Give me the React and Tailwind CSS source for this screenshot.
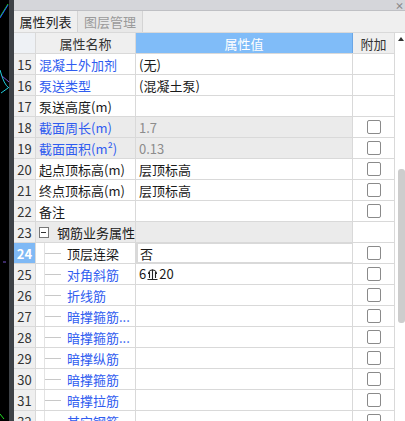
import React from 'react';

const rows = [
  { n: 15, name: '混凝土外加剂', blue: true, value: '(无)' },
  { n: 16, name: '泵送类型', blue: true, value: '(混凝土泵)' },
  { n: 17, name: '泵送高度(m)', value: '' },
  { n: 18, name: '截面周长(m)', blue: true, value: '1.7', gray: true, cb: true },
  { n: 19, name: '截面面积(m²)', blue: true, value: '0.13', gray: true, cb: true },
  { n: 20, name: '起点顶标高(m)', value: '层顶标高', cb: true },
  { n: 21, name: '终点顶标高(m)', value: '层顶标高', cb: true },
  { n: 22, name: '备注', value: '', cb: true },
  { n: 23, name: '钢筋业务属性', group: true, value: '' },
  { n: 24, name: '顶层连梁', child: true, value: '否', selected: true, cb: true },
  { n: 25, name: '对角斜筋', child: true, blue: true, value: 'rebar', cb: true },
  { n: 26, name: '折线筋', child: true, blue: true, value: '', cb: true },
  { n: 27, name: '暗撑箍筋...', child: true, blue: true, value: '', cb: true },
  { n: 28, name: '暗撑箍筋...', child: true, blue: true, value: '', cb: true },
  { n: 29, name: '暗撑纵筋', child: true, blue: true, value: '', cb: true },
  { n: 30, name: '暗撑箍筋', child: true, blue: true, value: '', cb: true },
  { n: 31, name: '暗撑拉筋', child: true, blue: true, value: '', cb: true },
  { n: 32, name: '其它钢筋', child: true, blue: true, value: '', cb: true },
];

// HRB400 rebar grade mark
const RebarMark = () => (
  <svg width="11" height="13" viewBox="0 0 11 13" className="inline-block mx-[1px] -mt-[3px] align-middle">
    <path d="M1.5 6a4 4 0 0 1 8 0" fill="none" stroke="#222" strokeWidth="1.1" />
    <path d="M5.5 1.5v9.5M2.5 4v6M8.5 4v6M0.5 11.5h10" fill="none" stroke="#222" strokeWidth="1.1" />
  </svg>
);

const Checkbox = () => (
  <div className="w-[14px] h-[14px] border border-[#8a8a8a] rounded-[2px] bg-white" />
);

const Row = ({ r }) => {
  const nameColor = r.blue ? 'text-[#2f5cf0]' : 'text-[#1a1a1a]';
  return (
    <div className="flex shrink-0 h-[21px] border-b border-[#d9d9d9]">
      <div
        className={`w-[22px] shrink-0 flex items-center justify-center border-r border-[#d9d9d9] text-[13px] ${
          r.selected ? 'bg-[#7fb9f5] text-white font-bold' : 'bg-[#efefef] text-[#333]'
        }`}
      >
        {r.n}
      </div>
      <div
        className={`w-[100px] shrink-0 flex items-center border-r border-[#d9d9d9] relative overflow-hidden whitespace-nowrap ${
          r.gray || r.group ? 'bg-[#ebebeb]' : 'bg-white'
        }`}
      >
        {r.group && (
          <>
            <div className="ml-[3px] w-[11px] h-[11px] border border-[#777] bg-white flex items-center justify-center">
              <div className="w-[5px] h-px bg-[#333]" />
            </div>
            <span className="ml-[8px] text-[#1a1a1a]">{r.name}</span>
          </>
        )}
        {r.child && (
          <>
            <div className="absolute left-[8px] top-0 bottom-0 w-px bg-[#e3e3e3]" />
            <div className="ml-[9px] w-[16px] h-px bg-[#c8c8c8]" />
            <span className={`ml-[6px] ${nameColor}`}>{r.name}</span>
          </>
        )}
        {!r.group && !r.child && <span className={`ml-[3px] ${nameColor}`}>{r.name}</span>}
      </div>
      <div
        className={`w-[217px] shrink-0 flex items-center border-r border-[#d9d9d9] whitespace-nowrap ${
          r.gray || r.group ? 'bg-[#ebebeb]' : 'bg-white'
        } ${r.selected ? 'border-2 border-[#6aa6e6] pl-[2px] -mt-px h-[22px]' : 'pl-[3px]'} ${
          r.gray ? 'text-[#8c8c8c]' : 'text-[#1a1a1a]'
        }`}
      >
        {r.value === 'rebar' ? (
          <span>
            6<RebarMark />20
          </span>
        ) : (
          r.value
        )}
      </div>
      <div className="w-[41px] shrink-0 flex items-center justify-center bg-white">
        {r.cb && <Checkbox />}
      </div>
    </div>
  );
};

export default function App() {
  return (
    <div
      className="w-[405px] h-[421px] overflow-hidden flex bg-white text-[13px] leading-none"
      style={{ fontFamily: '"Noto Sans CJK SC", "Noto Sans", sans-serif' }}
    >
      {/* CAD canvas edge */}
      <div className="w-[9px] shrink-0 bg-black relative">
        <svg width="9" height="421" className="absolute inset-0">
          <path d="M0 17L8 4" stroke="#22dd22" strokeWidth="1" />
          <path d="M0 18L8 5" stroke="#2255ff" strokeWidth="1" />
          <path d="M0 70Q4 85 9 88" stroke="#22d0e0" fill="none" strokeWidth="1" />
          <path d="M2 76L9 82" stroke="#7755cc" fill="none" strokeWidth="1" />
          <path d="M1 93L8 88" stroke="#22d0e0" fill="none" strokeWidth="1" />
          <path d="M3 262L6 262" stroke="#7755cc" strokeWidth="1" />
          <path d="M0 414L4 419" stroke="#22dd22" strokeWidth="1" />
        </svg>
      </div>
      <div className="w-[5px] shrink-0 bg-[#3e4247]" />

      <div className="flex-1 flex flex-col min-w-0">
        {/* title strip */}
        <div className="h-[11px] shrink-0 bg-[#d5d6da] border-b border-[#bfc0c4] flex justify-end items-center pr-[1px]">
          <span className="text-[9px] text-[#888] font-bold leading-none">×</span>
        </div>

        {/* tabs */}
        <div className="h-[22px] shrink-0 flex bg-[#efefef] border-b border-[#d9d9d9]">
          <div className="w-[64px] flex items-center justify-center text-[#222] border-r border-[#d4d4d4] bg-[#efefef]">
            属性列表
          </div>
          <div className="w-[65px] flex items-center justify-center text-[#9a9a9a] border-r border-[#d4d4d4] bg-[#e8e8e8]">
            图层管理
          </div>
        </div>

        <div className="flex-1 flex min-h-0 overflow-hidden">
          <div className="w-[380px] shrink-0 flex flex-col">
            {/* header */}
            <div className="flex h-[21px] shrink-0 border-b border-[#d9d9d9]">
              <div className="w-[22px] shrink-0 bg-[#eef1f5] border-r border-[#d9d9d9]" />
              <div className="w-[100px] shrink-0 bg-[#efefef] border-r border-[#d9d9d9] flex items-center justify-center text-[#333]">
                属性名称
              </div>
              <div className="w-[217px] shrink-0 bg-[#80bcf8] border-r border-[#6aa6e6] flex items-center justify-center text-white">
                属性值
              </div>
              <div className="w-[41px] shrink-0 bg-[#efefef] flex items-center justify-center text-[#333]">
                附加
              </div>
            </div>
            {rows.map((r) => (
              <Row key={r.n} r={r} />
            ))}
          </div>

          {/* scrollbar */}
          <div className="flex-1 bg-white border-l border-[#d9d9d9] relative">
            <div className="absolute left-[3px] top-[4px] w-0 h-0 border-l-[3px] border-r-[3px] border-b-[4px] border-l-transparent border-r-transparent border-b-[#333]" />
            <div className="absolute left-[3px] top-[136px] w-[7px] h-[154px] rounded-[3px] bg-[#cdcdcd]" />
          </div>
        </div>
      </div>
    </div>
  );
}
